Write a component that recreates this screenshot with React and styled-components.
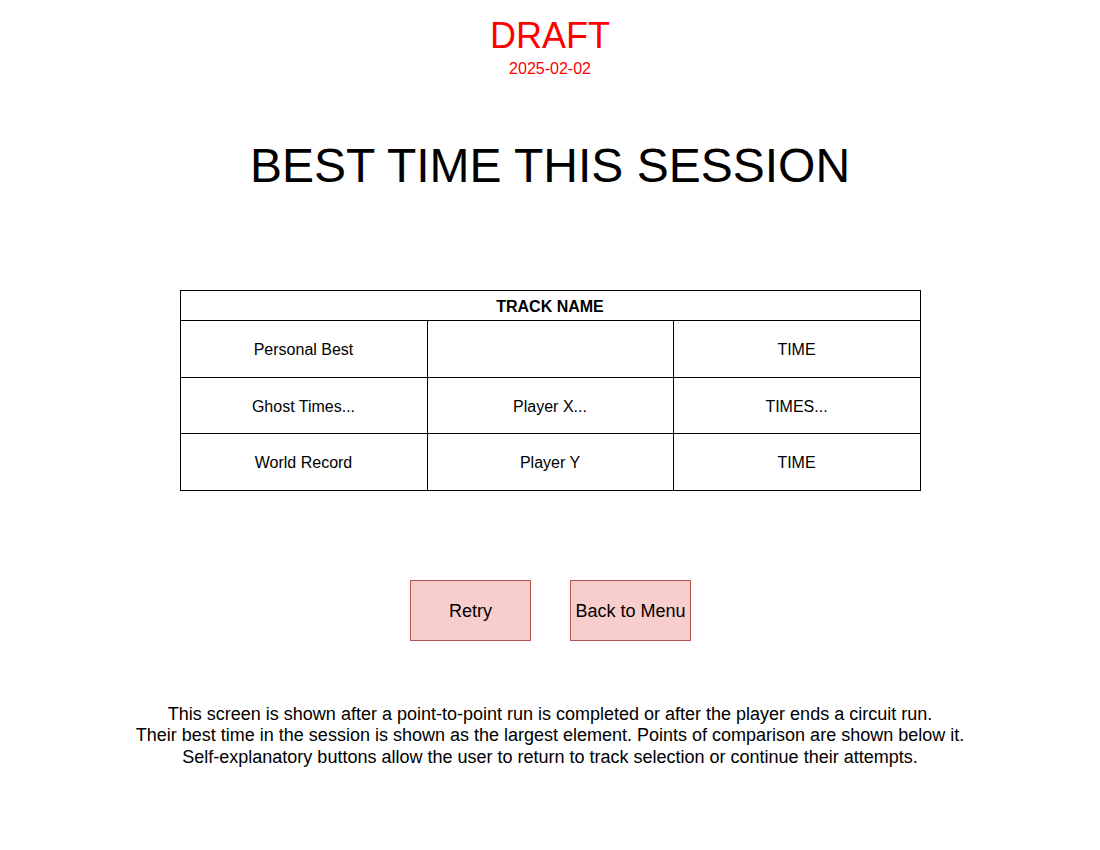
import React from 'react';
import styled, { createGlobalStyle } from 'styled-components';

const GlobalStyle = createGlobalStyle`
  html, body {
    margin: 0;
    padding: 0;
    background: #ffffff;
  }
  body {
    font-family: "Liberation Sans", Arial, Helvetica, sans-serif;
    color: #000000;
  }
`;

const Page = styled.div`
  width: 1100px;
  min-height: 850px;
  padding-top: 14px;
  box-sizing: border-box;
  display: flex;
  flex-direction: column;
  align-items: center;
`;

const Draft = styled.div`
  color: #ff0000;
  font-size: 36px;
  line-height: 1.2;
`;

const DateStamp = styled.div`
  color: #ff0000;
  font-size: 16px;
  line-height: 1.2;
  margin-top: 2px;
`;

const Title = styled.h1`
  margin: 59px 0 0;
  font-size: 48px;
  font-weight: normal;
  line-height: 1.2;
`;

const Board = styled.div`
  margin-top: 95px;
  width: 741px;
  box-sizing: border-box;
  border: 1px solid #000000;
  display: grid;
  grid-template-columns: 246px 246px 247px;
`;

const HeaderCell = styled.div`
  grid-column: 1 / span 3;
  height: 30px;
  box-sizing: border-box;
  padding-top: 4px;
  border-bottom: 1px solid #000000;
  display: flex;
  align-items: center;
  justify-content: center;
  font-size: 16px;
  font-weight: bold;
`;

const Cell = styled.div`
  height: ${(p) => p.$h}px;
  box-sizing: border-box;
  padding-top: 3px;
  border-left: ${(p) => (p.$first ? 'none' : '1px solid #000000')};
  border-bottom: ${(p) => (p.$last ? 'none' : '1px solid #000000')};
  display: flex;
  align-items: center;
  justify-content: center;
  font-size: 16px;
`;

const Buttons = styled.div`
  margin-top: 89px;
  display: flex;
  gap: 39px;
  padding-left: 1px;
`;

const Button = styled.button`
  width: 121px;
  height: 61px;
  box-sizing: border-box;
  background: #f8cecc;
  border: 1px solid #b85450;
  padding: 2px 0 0;
  font-family: inherit;
  font-size: 18px;
  color: #000000;
  cursor: pointer;
`;

const Notes = styled.p`
  margin: 63px 0 0;
  text-align: center;
  font-size: 18px;
  line-height: 21.4px;
`;

const rows = [
  { h: 57, cells: ['Personal Best', '', 'TIME'] },
  { h: 56, cells: ['Ghost Times...', 'Player X...', 'TIMES...'] },
  { h: 56, cells: ['World Record', 'Player Y', 'TIME'] },
];

export default function App() {
  return (
    <>
      <GlobalStyle />
      <Page>
        <Draft>DRAFT</Draft>
        <DateStamp>2025-02-02</DateStamp>
        <Title>BEST TIME THIS SESSION</Title>
        <Board>
          <HeaderCell>TRACK NAME</HeaderCell>
          {rows.map((row, r) =>
            row.cells.map((text, c) => (
              <Cell
                key={`${r}-${c}`}
                $h={row.h}
                $first={c === 0}
                $last={r === rows.length - 1}
              >
                {text}
              </Cell>
            ))
          )}
        </Board>
        <Buttons>
          <Button>Retry</Button>
          <Button>Back to Menu</Button>
        </Buttons>
        <Notes>
          This screen is shown after a point-to-point run is completed or after the player ends a circuit run.
          <br />
          Their best time in the session is shown as the largest element. Points of comparison are shown below it.
          <br />
          Self-explanatory buttons allow the user to return to track selection or continue their attempts.
        </Notes>
      </Page>
    </>
  );
}
